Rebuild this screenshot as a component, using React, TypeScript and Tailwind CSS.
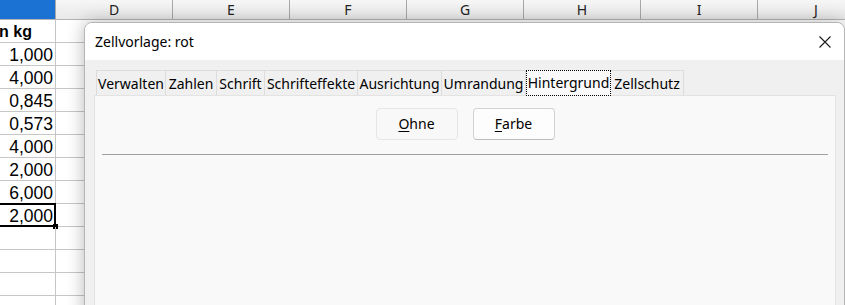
import React from "react";

const cols = ["D", "E", "F", "G", "H", "I", "J"];
const rows: { v: string; bold?: boolean; sel?: boolean }[] = [
  { v: "n kg", bold: true },
  { v: "1,000" },
  { v: "4,000" },
  { v: "0,845" },
  { v: "0,573" },
  { v: "4,000" },
  { v: "2,000" },
  { v: "6,000" },
  { v: "2,000", sel: true },
  { v: "" },
  { v: "" },
  { v: "" },
  { v: "" },
];

const tabs: { label: string; w: string; active?: boolean }[] = [
  { label: "Verwalten", w: "w-[70px]" },
  { label: "Zahlen", w: "w-[51px]" },
  { label: "Schrift", w: "w-[48px]" },
  { label: "Schrifteffekte", w: "w-[93px]" },
  { label: "Ausrichtung", w: "w-[84px]" },
  { label: "Umrandung", w: "w-[84px]" },
  { label: "Hintergrund", w: "w-[85px]", active: true },
  { label: "Zellschutz", w: "w-[73px]" },
];

export default function App() {
  return (
    <div className="relative w-[845px] h-[305px] overflow-hidden bg-white">
      {/* Spreadsheet */}
      <div className="flex flex-col">
        <div className="flex h-[20px] border-b border-[#b4b4b4] font-['Noto_Sans',sans-serif] text-[14px] text-[#222]">
          <div className="w-[56px] shrink-0 bg-[#1b72d3] border-r border-[#a8a8a8]" />
          {cols.map((c) => (
            <div
              key={c}
              className="w-[117px] shrink-0 flex items-center justify-center bg-gradient-to-b from-[#f6f6f6] to-[#e9e9e9] border-r border-[#a8a8a8] leading-none"
            >
              {c}
            </div>
          ))}
        </div>
        {rows.map((r, i) => (
          <div key={i} className="flex h-[23px] border-b border-[#c6c6c6]">
            <div
              className={`relative w-[56px] shrink-0 border-r border-[#c6c6c6] flex justify-end items-center pt-[1px] overflow-visible whitespace-nowrap font-['Liberation_Sans',Arial,sans-serif] text-black leading-[22px] ${
                r.bold ? "font-bold text-[16px] pr-[23px]" : "text-[17.5px] pr-[2px]"
              }`}
            >
              {r.v}
              {r.sel && (
                <>
                  <div className="absolute left-[-2px] top-[-1px] w-[58px] h-[24px] border-2 border-black" />
                  <div className="absolute left-[53px] top-[20px] w-[5px] h-[5px] bg-black" />
                </>
              )}
            </div>
            <div className="flex-1" />
          </div>
        ))}
      </div>

      {/* Dialog */}
      <div className="absolute left-[84px] top-[22px] w-[761px] h-[300px] rounded-t-[8px] border border-[#b5b5b5] overflow-hidden shadow-[0_0_18px_rgba(0,0,0,0.28)] bg-[#f0f0f0] font-['Noto_Sans',sans-serif] text-black">
        <div className="h-[37px] bg-white flex items-center justify-between pl-[10px] pr-[13px]">
          <span className="text-[14px] leading-none">Zellvorlage: rot</span>
          <svg width="12" height="12" viewBox="0 0 12 12" className="block">
            <path d="M0.5 0.5 L11.5 11.5 M11.5 0.5 L0.5 11.5" stroke="#1a1a1a" strokeWidth="1.1" fill="none" />
          </svg>
        </div>
        <div className="pt-[10px] px-[9px] flex flex-col">
          <div className="flex items-end h-[25px] ml-[2px]">
            {tabs.map((t, i) =>
              t.active ? (
                <div
                  key={t.label}
                  className={`${t.w} relative h-[26px] -mb-[1px] z-10 bg-[#f9f9f9] flex items-center justify-center text-[14px] leading-[25px] pb-[1px]`}
                >
                  <span className="absolute inset-0 border border-dotted border-black" />
                  {t.label}
                </div>
              ) : (
                <div
                  key={t.label}
                  className={`${t.w} h-[25px] bg-[#f0f0f0] border-t border-r border-[#dcdcdc] ${
                    i === 0 ? "border-l" : ""
                  } flex items-center justify-center text-[14px] leading-[25px]`}
                >
                  {t.label}
                </div>
              )
            )}
          </div>
          <div className="h-[240px] mr-[-1px] bg-[#f9f9f9] border border-[#e3e3e3] flex flex-col">
            <div className="flex justify-center gap-[15px] pt-[12px]">
              <button className="w-[82px] h-[32px] rounded-[4px] border border-[#e6e6e6] bg-[#f8f8f8] text-[14px] leading-none">
                <span className="underline underline-offset-2">O</span>hne
              </button>
              <button className="w-[82px] h-[32px] rounded-[4px] border border-[#d2d2d2] border-b-[#bdbdbd] bg-[#fdfdfd] text-[14px] leading-none">
                <span className="underline underline-offset-2">F</span>arbe
              </button>
            </div>
            <div className="mt-[14px] mx-[7px] h-[1px] bg-[#a0a0a0]" />
          </div>
        </div>
      </div>
    </div>
  );
}
